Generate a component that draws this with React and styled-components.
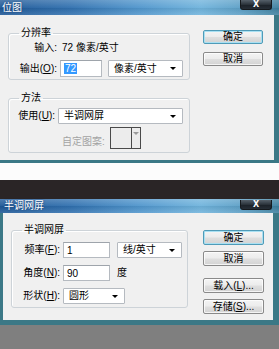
import React from "react";
import styled, { createGlobalStyle } from "styled-components";

const Global = createGlobalStyle`
  *, *::before, *::after { box-sizing: border-box; }
  html, body { margin: 0; padding: 0; background: #7f7f7f; }
`;

const Page = styled.div`
  display: flex;
  flex-direction: column;
  width: 279px;
  height: 349px;
  overflow: hidden;
  background: #7f7f7f;
  font-family: "Liberation Sans", "Noto Sans CJK SC", sans-serif;
  font-size: 10px;
  color: #000;
`;

const Window = styled.section`
  display: flex;
  flex-direction: column;
  flex: none;
`;

const TitleBar = styled.header`
  height: ${(p) => p.$h}px;
  display: flex;
  align-items: flex-start;
  justify-content: space-between;
  padding: 0 7px 0 ${(p) => p.$pl}px;
  background:
    linear-gradient(180deg, rgba(255,255,255,0.22) 0%, rgba(255,255,255,0.05) 50%, rgba(0,0,0,0.05) 51%, rgba(255,255,255,0.12) 100%),
    linear-gradient(90deg, #1d5796 0%, #2f6fae 25%, #4f95cc 50%, #6fb3dc 72%, #5c9fc6 86%, #3d7f9e 100%);
`;

const Title = styled.span`
  color: #fff;
  font-size: 10px;
  line-height: ${(p) => p.$h}px;
  text-shadow: 0 0 2px rgba(0, 30, 80, 0.6);
`;

const CloseButton = styled.button`
  width: 32px;
  height: 10px;
  margin-top: ${(p) => p.$top}px;
  padding: 0;
  border: 1px solid #15191d;
  border-top: none;
  border-radius: 0 0 3px 3px;
  background: linear-gradient(180deg, #55606a 0%, #2b333b 50%, #1a2027 51%, #262e36 100%);
  color: #fff;
  font-family: "DejaVu Sans", sans-serif;
  font-size: 8px;
  font-weight: bold;
  line-height: 9px;
  display: flex;
  align-items: center;
  justify-content: center;
`;

const Body = styled.div`
  display: flex;
  align-items: flex-start;
  height: ${(p) => p.$h}px;
  background: #f0f0f0;
  border-style: solid;
  border-color: #3b7886;
  border-width: 0 ${(p) => p.$br}px ${(p) => p.$bb}px ${(p) => p.$bl}px;
  padding-left: 8px;
  gap: ${(p) => p.$gap}px;
`;

const LeftCol = styled.div`
  display: flex;
  flex-direction: column;
  gap: ${(p) => p.$gap}px;
  margin-top: ${(p) => p.$top}px;
`;

const Group = styled.fieldset`
  margin: 0;
  padding: ${(p) => p.$pad};
  width: ${(p) => p.$w}px;
  min-width: 0;
  border: 1px solid #cdd3d8;
  border-radius: 3px;
  box-shadow: inset 1px 1px 0 #fff;
`;

const Legend = styled.legend`
  margin-left: 10px;
  padding: 0 2px;
  font-size: 10px;
  line-height: 12px;
`;

const FormGrid = styled.div`
  display: grid;
  grid-template-columns: ${(p) => p.$label}px auto;
  column-gap: 3px;
  row-gap: ${(p) => p.$rowGap}px;
  align-items: center;
`;

const Label = styled.span`
  justify-self: end;
  white-space: nowrap;
  line-height: 12px;
  color: ${(p) => (p.$disabled ? "#a3a3a3" : "#000")};
`;

const Value = styled.span`
  padding-left: 2px;
  line-height: 14px;
  white-space: nowrap;
`;

const Line = styled.div`
  display: flex;
  align-items: ${(p) => p.$align || "center"};
  gap: ${(p) => p.$gap}px;
  height: ${(p) => p.$h}px;
  padding-left: ${(p) => p.$pl || 0}px;
`;

const TextBox = styled.div`
  width: ${(p) => p.$w}px;
  height: ${(p) => p.$h}px;
  display: flex;
  align-items: center;
  padding-left: 3px;
  background: #fff;
  border: 1px solid #b5bac0;
  border-top-color: #9ea4ab;
  line-height: 11px;
`;

const Selected = styled.span`
  background: #3399ff;
  color: #fff;
  padding: 0 1px;
`;

const Combo = styled.div`
  width: ${(p) => p.$w}px;
  height: ${(p) => p.$h}px;
  display: flex;
  align-items: center;
  justify-content: space-between;
  padding: 0 6px 0 5px;
  background: #fff;
  border: 1px solid #b5bac0;
  border-radius: 1px;
  line-height: 12px;
  white-space: nowrap;
`;

const Arrow = styled.span`
  width: 0;
  height: 0;
  border-left: 3px solid transparent;
  border-right: 3px solid transparent;
  border-top: 3px solid ${(p) => p.$color || "#000"};
`;

const Swatch = styled.div`
  display: flex;
  width: 31px;
  height: 22px;
  border: 1px solid #4a4a4a;
  background: #ececec;
`;

const SwatchFace = styled.div`
  flex: 1;
  border-right: 1px solid #4a4a4a;
`;

const SwatchDrop = styled.div`
  width: 8px;
  display: flex;
  justify-content: center;
  padding-top: 4px;
`;

const ButtonCol = styled.div`
  display: flex;
  flex-direction: column;
  margin-top: ${(p) => p.$top}px;
`;

const Button = styled.button`
  width: ${(p) => p.$w}px;
  height: ${(p) => p.$h}px;
  margin-top: ${(p) => p.$mt || 0}px;
  padding: 0;
  font-family: inherit;
  font-size: 10px;
  line-height: 12px;
  color: #000;
  border: 1px solid ${(p) => (p.$default ? "#4f9bb8" : "#8a8a8a")};
  border-radius: 2px;
  background: linear-gradient(180deg, #f4f4f4 0%, #ececec 48%, #dfdfdf 52%, #d3d3d3 100%);
  box-shadow: inset 0 0 0 1px ${(p) => (p.$default ? "#a9e0f2" : "rgba(255,255,255,0.75)")};
`;

const WhiteGap = styled.div`
  height: 17px;
  flex: none;
  background: #fcfcfc;
`;

const DarkBand = styled.div`
  height: 19px;
  flex: none;
  background: #2a2526;
`;

const GrayFill = styled.div`
  flex: 1;
  background: #7f7f7f;
`;

export default function App() {
  return (
    <>
      <Global />
      <Page>
        <Window>
          <TitleBar $h={15} $pl={2}>
            <Title $h={15}>位图</Title>
            <CloseButton $top={0}>X</CloseButton>
          </TitleBar>
          <Body $h={148} $br={5} $bb={3} $bl={0} $gap={13}>
            <LeftCol $top={12} $gap={12}>
              <Group $w={182} $pad="2px 0 2px 0">
                <Legend>分辨率</Legend>
                <FormGrid $label={48} $rowGap={5}>
                  <Label>输入:</Label>
                  <Value>72 像素/英寸</Value>
                  <Label>
                    输出(<u>O</u>):
                  </Label>
                  <Line $gap={6} $h={17}>
                    <TextBox $w={42} $h={17}>
                      <Selected>72</Selected>
                    </TextBox>
                    <Combo $w={75} $h={17}>
                      像素/英寸
                      <Arrow />
                    </Combo>
                  </Line>
                </FormGrid>
              </Group>
              <Group $w={182} $pad="4px 0 3px 0">
                <Legend>方法</Legend>
                <FormGrid $label={46} $rowGap={3}>
                  <Label>
                    使用(<u>U</u>):
                  </Label>
                  <Combo $w={125} $h={16}>
                    半调网屏
                    <Arrow />
                  </Combo>
                  <span />
                  <Line $gap={5} $h={22} $pl={4} $align="flex-end">
                    <Label $disabled style={{ paddingBottom: 1 }}>
                      自定图案:
                    </Label>
                    <Swatch>
                      <SwatchFace />
                      <SwatchDrop>
                        <Arrow $color="#9a9a9a" />
                      </SwatchDrop>
                    </Swatch>
                  </Line>
                </FormGrid>
              </Group>
            </LeftCol>
            <ButtonCol $top={15}>
              <Button $default $w={60} $h={14}>
                确定
              </Button>
              <Button $w={60} $h={14} $mt={8}>
                取消
              </Button>
            </ButtonCol>
          </Body>
        </Window>

        <WhiteGap />
        <DarkBand />

        <Window>
          <TitleBar $h={14} $pl={4}>
            <Title $h={14}>半调网屏</Title>
            <CloseButton $top={1}>X</CloseButton>
          </TitleBar>
          <Body $h={112} $br={6} $bb={5} $bl={3} $gap={15}>
            <LeftCol $top={11} $gap={0}>
              <Group $w={177} $pad="6px 0 3px 0">
                <Legend>半调网屏</Legend>
                <FormGrid $label={48} $rowGap={7}>
                  <Label>
                    频率(<u>F</u>):
                  </Label>
                  <Line $gap={7} $h={16}>
                    <TextBox $w={47} $h={16}>1</TextBox>
                    <Combo $w={65} $h={16}>
                      线/英寸
                      <Arrow />
                    </Combo>
                  </Line>
                  <Label>
                    角度(<u>N</u>):
                  </Label>
                  <Line $gap={7} $h={16}>
                    <TextBox $w={47} $h={16}>90</TextBox>
                    <Label>度</Label>
                  </Line>
                  <Label>
                    形状(<u>H</u>):
                  </Label>
                  <Combo $w={62} $h={16}>
                    圆形
                    <Arrow />
                  </Combo>
                </FormGrid>
              </Group>
            </LeftCol>
            <ButtonCol $top={17}>
              <Button $default $w={61} $h={15}>
                确定
              </Button>
              <Button $w={61} $h={15} $mt={6}>
                取消
              </Button>
              <Button $w={61} $h={15} $mt={12}>
                载入(<u>L</u>)...
              </Button>
              <Button $w={61} $h={15} $mt={6}>
                存储(<u>S</u>)...
              </Button>
            </ButtonCol>
          </Body>
        </Window>

        <GrayFill />
      </Page>
    </>
  );
}
